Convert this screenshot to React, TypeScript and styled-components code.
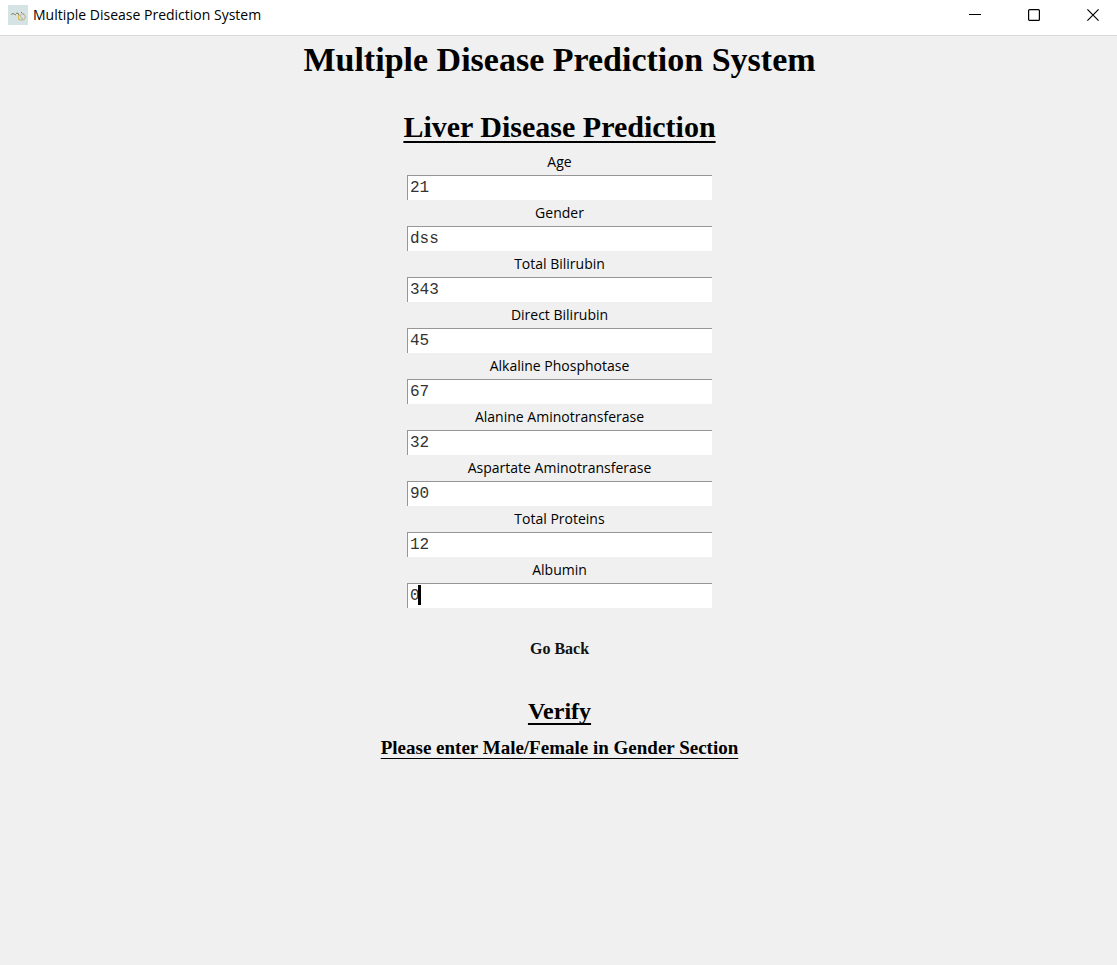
import { useState } from "react";
import styled, { createGlobalStyle } from "styled-components";

const GlobalStyle = createGlobalStyle`
  *, *::before, *::after { box-sizing: border-box; }
  body { margin: 0; background: #f0f0f0; color: #000; font-family: "Liberation Serif", serif; }
`;

const Window = styled.div`
  min-height: 100vh;
  display: flex;
  flex-direction: column;
`;

const TitleBar = styled.header`
  display: flex;
  align-items: center;
  justify-content: space-between;
  height: 36px;
  padding: 0 0 5px 8px;
  background: #fff;
  border-bottom: 1px solid #d9d9d9;
`;

const Caption = styled.div`
  display: flex;
  align-items: center;
  gap: 5px;
  font-family: "Open Sans", "Noto Sans", sans-serif;
  font-size: 14px;
  line-height: 20px;
  white-space: nowrap;
`;

const WindowControls = styled.div`
  display: flex;
  gap: 11px;
`;

const WindowButton = styled.button`
  display: flex;
  align-items: center;
  justify-content: center;
  width: 48px;
  height: 30px;
  padding: 0;
  border: 0;
  background: none;
`;

const Content = styled.main`
  display: flex;
  flex-direction: column;
  align-items: center;
  text-align: center;
  padding: 4px 0 40px 2px;
`;

const PageTitle = styled.h1`
  margin: 0 0 29px;
  font-size: 34px;
  line-height: 40px;
`;

const Heading = styled.h2<{ $size: number; $line: number; $rule: number }>`
  margin: 0;
  font-size: ${(p) => p.$size}px;
  line-height: ${(p) => p.$line}px;
  text-decoration: underline;
  text-decoration-thickness: ${(p) => p.$rule}px;
  text-underline-offset: 4px;
  text-decoration-skip-ink: none;
`;

const Form = styled.form`
  display: flex;
  flex-direction: column;
  align-items: center;
  gap: 2px;
  width: 100%;
  padding-top: 6px;
`;

const Field = styled.div`
  width: 305px;
  max-width: 100%;
`;

const Label = styled.label`
  display: block;
  padding-bottom: 2px;
  font-family: "Open Sans", "Noto Sans", sans-serif;
  font-size: 14px;
  line-height: 22px;
`;

const InputWrap = styled.div`
  position: relative;
  display: flex;
  font-family: "Liberation Mono", monospace;
  font-size: 16px;
`;

const Input = styled.input`
  width: 100%;
  height: 25px;
  padding: 0 2px;
  border: 0 solid #969696;
  border-width: 1px 0 0 1px;
  border-radius: 0;
  background: #fff;
  color: #333;
  font: inherit;
  outline: none;
`;

const Caret = styled.span`
  position: absolute;
  top: 2px;
  left: 11px;
  width: 3px;
  height: 20px;
  background: #000;
`;

const BackButton = styled.button`
  margin: 27px 0 32px;
  padding: 0;
  border: 0;
  background: none;
  color: #111;
  font: bold 16px/24px "Liberation Serif", serif;
`;

const fields = [
  { id: "age", label: "Age", value: "21" },
  { id: "gender", label: "Gender", value: "dss" },
  { id: "total-bilirubin", label: "Total Bilirubin", value: "343" },
  { id: "direct-bilirubin", label: "Direct Bilirubin", value: "45" },
  { id: "alkaline", label: "Alkaline Phosphotase", value: "67" },
  { id: "alanine", label: "Alanine Aminotransferase", value: "32" },
  { id: "aspartate", label: "Aspartate Aminotransferase", value: "90" },
  { id: "proteins", label: "Total Proteins", value: "12" },
  { id: "albumin", label: "Albumin", value: "0", active: true },
];

const AppIcon = () => (
  <svg width="20" height="20" viewBox="0 0 20 20" fill="none" aria-hidden="true">
    <rect width="20" height="20" fill="#d5e3e4" />
    <path d="M3 9.500 5 8.500l3 1.500M8 8.500l2-.5 1 3" stroke="#857f6c" />
    <path d="M11 14c1 1.500 5 1.500 6-.5s-.5-4.500-2.500-4.500-3 2-1.500 3.500 2 .5 2 .5" stroke="#b9ad80" />
    <path d="M10.500 10v4.500l1.500.5" stroke="#e0bd4c" />
    <path d="M13 7.500h1M15 8.500l1 1" stroke="#777b75" />
  </svg>
);

export default function App() {
  const [values, setValues] = useState<Record<string, string>>(
    Object.fromEntries(fields.map((f) => [f.id, f.value]))
  );
  return (
    <>
      <GlobalStyle />
      <Window>
        <TitleBar>
          <Caption>
            <AppIcon />
            <span>Multiple Disease Prediction System</span>
          </Caption>
          <WindowControls>
            <WindowButton type="button" aria-label="Minimize">
              <svg width="12" height="12" viewBox="0 0 12 12">
                <path d="M0 5.500h12" stroke="#000" />
              </svg>
            </WindowButton>
            <WindowButton type="button" aria-label="Maximize">
              <svg width="12" height="12" viewBox="0 0 12 12">
                <rect x=".6" y=".6" width="10.800" height="10.800" rx="1" fill="none" stroke="#000" strokeWidth="1.200" />
              </svg>
            </WindowButton>
            <WindowButton type="button" aria-label="Close">
              <svg width="12" height="12" viewBox="0 0 12 12">
                <path d="m.4.4 11.200 11.200M11.600.4.4 11.600" stroke="#000" strokeWidth="1.200" />
              </svg>
            </WindowButton>
          </WindowControls>
        </TitleBar>
        <Content>
          <PageTitle>Multiple Disease Prediction System</PageTitle>
          <Heading $size={30} $line={36} $rule={2}>Liver Disease Prediction</Heading>
          <Form onSubmit={(e) => e.preventDefault()}>
            {fields.map((f) => (
              <Field key={f.id}>
                <Label htmlFor={f.id}>{f.label}</Label>
                <InputWrap>
                  <Input
                    id={f.id}
                    type="text"
                    value={values[f.id]}
                    onChange={(e) => setValues({ ...values, [f.id]: e.target.value })}
                  />
                  {f.active && <Caret />}
                </InputWrap>
              </Field>
            ))}
            <BackButton type="button">Go Back</BackButton>
          </Form>
          <Heading $size={24} $line={36} $rule={2}>Verify</Heading>
          <Heading as="p" $size={19} $line={38} $rule={1}>
            <b>Please enter Male/Female in Gender Section</b>
          </Heading>
        </Content>
      </Window>
    </>
  );
}
